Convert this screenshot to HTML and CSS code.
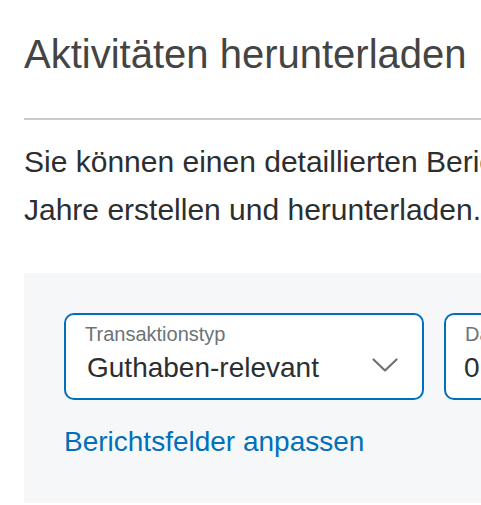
FILE: index.html
```html
<!DOCTYPE html>
<html lang="de">
<head>
<meta charset="utf-8">
<title>Aktivitäten herunterladen</title>
<link rel="stylesheet" href="styles.css">
</head>
<body>
<main class="page">
  <h1 class="title">Aktivitäten herunterladen</h1>
  <hr class="divider">
  <p class="intro">Sie können einen detaillierten Bericht Ihrer Aktivitäten für bis zu 7 Jahre erstellen und herunterladen.</p>
  <section class="panel">
    <div class="fields">
      <div class="field field-type">
        <span class="field-label">Transaktionstyp</span>
        <div class="field-row">
          <span class="field-value">Guthaben-relevant</span>
          <svg class="chevron" width="26" height="14" viewBox="0 0 26 14" aria-hidden="true">
            <path d="M1.5 1.5 L13 12.5 L24.5 1.5" fill="none" stroke="#6c7378" stroke-width="2.2" stroke-linecap="round" stroke-linejoin="round"/>
          </svg>
        </div>
      </div>
      <div class="field field-date">
        <span class="field-label">Datumsbereich</span>
        <div class="field-row">
          <span class="field-value field-value-date">01.05.2024 - 31.05.2024</span>
        </div>
      </div>
    </div>
    <a class="link" href="#">Berichtsfelder anpassen</a>
  </section>
</main>
</body>
</html>
```

FILE: styles.css
```css
html, body {
  margin: 0;
  padding: 0;
  overflow: hidden;
  background: #ffffff;
}

body {
  font-family: "Liberation Sans", Arial, sans-serif;
  color: #2c2e2f;
}

.page {
  width: 900px;
  padding: 30px 0 0 24px;
}

.title {
  margin: 0;
  font-size: 40px;
  line-height: 48px;
  font-weight: 400;
  color: #444444;
}

.divider {
  margin: 40px 0 0 0;
  border: 0;
  height: 2px;
  background: #cbcbcb;
}

.intro {
  margin: 18px 0 0 0;
  font-size: 30px;
  line-height: 48px;
  color: #2c2e2f;
}

.panel {
  margin-top: 39px;
  background: #f6f7f9;
  padding: 40px 0 43px 40px;
}

.fields {
  display: flex;
  gap: 20px;
}

.field {
  box-sizing: border-box;
  height: 87px;
  border: 2px solid #0070ba;
  border-radius: 10px;
  background: #ffffff;
  padding: 7px 0 10px 19px;
  display: flex;
  flex-direction: column;
}

.field-type {
  width: 360px;
  padding-right: 24px;
}

.field-date {
  width: 360px;
}

.field-label {
  font-size: 20px;
  line-height: 24px;
  color: #6c7378;
}

.field-row {
  margin-top: 2px;
  display: flex;
  align-items: center;
  justify-content: space-between;
  height: 40px;
}

.field-value {
  font-size: 28px;
  line-height: 40px;
  color: #2c2e2f;
  white-space: nowrap;
  padding-left: 2px;
}

.field-value-date {
  padding-left: 0;
  margin-left: -1px;
}

.chevron {
  display: block;
  margin-bottom: 6px;
}

.link {
  display: block;
  margin-top: 24px;
  font-size: 28px;
  line-height: 36px;
  color: #0070ba;
  text-decoration: none;
}
```
